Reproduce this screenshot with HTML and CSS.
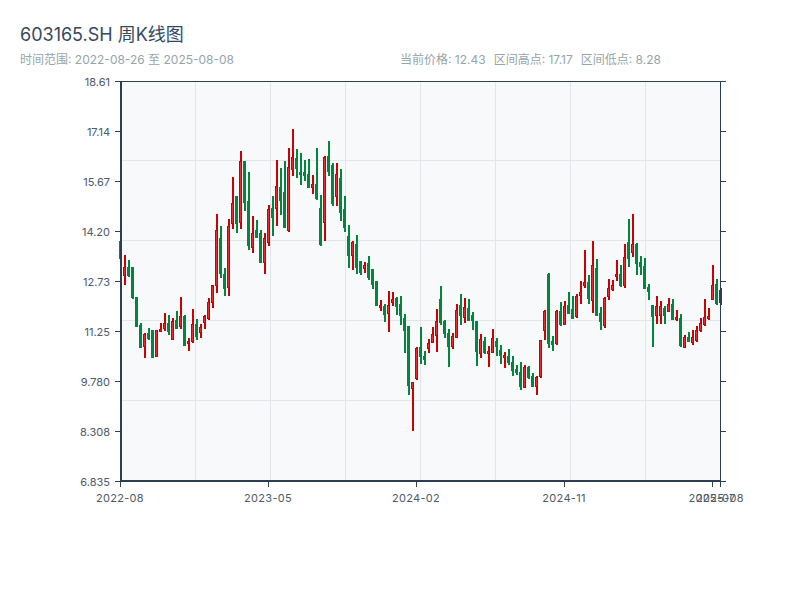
FILE: index.html
```html
<!DOCTYPE html>
<html>
<head>
    <meta charset="utf-8">
    <title>603165.SH 周K线图</title>
    <link rel="stylesheet" href="styles.css">
</head>
<body>
    <div class="header">
        <h1 class="title">603165.SH 周K线图</h1>
        <div class="meta">
            <div class="range">时间范围: 2022-08-26 至 2025-08-08</div>
            <div class="stats">
                <span>当前价格: 12.43</span>
                <span>区间高点: 17.17</span>
                <span>区间低点: 8.28</span>
            </div>
        </div>
    </div>

    <svg id="chart" class="chart" viewBox="0 70 800 530" xmlns="http://www.w3.org/2000/svg"></svg>

    <script>
        // [wick top, wick bottom, body top, body bottom, 1 = red], all in pixels
        const candles = [
            [241,258,241,258,0],[255,285,267,275,1],[260,277,267,275,0],[267,299,267,297,0],[297,327,297,326,0],
            [323,348,325,347,0],[333,358,334,346,1],[328,340,333,338,0],[330,357,330,357,0],[330,356,330,356,1],
            [323,331,329,331,1],[313,331,323,328,1],[315,335,323,331,0],[318,340,321,339,1],[311,329,320,328,0],
            [297,329,316,326,1],[315,346,316,345,0],[338,351,341,343,1],[309,343,324,341,1],[319,340,324,336,0],
            [324,338,327,332,1],[315,329,316,322,1],[298,320,302,318,1],[285,308,285,302,1],[214,293,230,285,1],
            [226,278,238,273,0],[268,296,274,288,0],[219,296,226,287,1],[177,229,203,223,1],[196,233,196,223,0],
            [151,229,161,222,1],[161,211,161,202,0],[172,250,201,245,0],[216,253,233,247,1],[220,238,230,237,0],
            [230,263,233,262,0],[233,274,238,262,1],[205,246,209,242,1],[196,236,208,217,0],[160,226,186,208,1],
            [168,215,187,200,0],[161,227,192,227,0],[148,232,167,230,1],[129,176,157,169,1],[149,178,158,168,0],
            [153,185,172,174,0],[160,181,172,175,0],[159,188,174,187,0],[175,194,184,187,1],[148,200,184,198,0],
            [195,246,208,244,0],[156,241,157,222,1],[141,176,156,171,0],[163,206,165,203,0],[163,206,174,196,1],
            [169,221,178,212,0],[196,232,209,227,0],[225,268,236,255,0],[241,270,242,255,1],[235,274,244,267,0],
            [261,275,261,272,0],[262,273,265,268,1],[256,280,263,277,0],[269,289,269,284,0],[281,306,281,305,0],
            [300,311,305,307,1],[304,322,306,314,0],[291,332,305,313,1],[292,306,299,302,1],[297,315,298,306,0],
            [296,325,304,315,0],[314,353,318,330,0],[326,395,326,385,0],[382,431,382,388,1],[347,380,348,378,1],
            [327,364,347,356,0],[351,365,356,359,0],[339,353,343,348,1],[327,343,334,342,1],[309,352,321,335,1],
            [286,325,299,322,0],[320,338,321,333,0],[329,367,333,346,0],[333,349,336,346,1],[304,338,310,337,1],
            [294,325,305,315,0],[298,323,307,317,1],[299,321,308,320,0],[312,330,315,320,0],[321,366,321,351,0],
            [334,358,339,353,1],[337,354,341,352,0],[346,367,351,353,1],[329,353,338,352,1],[338,356,341,346,0],
            [345,364,350,355,0],[352,368,355,357,1],[349,365,356,362,0],[356,376,362,370,0],[365,375,369,372,0],
            [362,390,372,386,0],[365,388,367,387,1],[366,379,367,377,0],[373,387,376,386,0],[376,395,377,386,1],
            [340,378,340,376,1],[310,340,311,330,1],[273,348,274,343,0],[336,351,341,344,0],[310,345,311,343,1],
            [302,326,311,324,0],[301,325,306,324,1],[292,313,305,313,0],[296,319,309,318,0],[294,318,296,316,1],
            [281,304,292,295,1],[250,288,282,285,1],[275,304,282,298,0],[241,313,265,300,1],[259,315,268,315,0],
            [307,330,313,321,0],[297,328,298,325,1],[279,300,288,296,1],[280,291,285,289,1],[260,281,274,276,1],
            [265,287,274,285,0],[244,288,257,285,1],[219,267,242,258,0],[214,257,244,252,1],[243,275,244,263,0],
            [256,275,262,266,0],[258,288,266,288,0],[284,300,287,291,0],[305,347,305,316,0],[296,324,306,315,1],
            [301,324,306,315,1],[306,324,308,315,0],[298,311,304,311,1],[299,320,304,319,0],[310,321,317,319,1],
            [314,347,318,345,0],[335,348,337,347,1],[332,342,337,341,0],[330,345,337,342,1],[326,342,330,340,1],
            [318,332,323,330,1],[299,326,317,324,1],[308,320,316,318,1],[265,300,285,299,1],[279,305,284,303,0],
            [288,305,290,302,1]
        ];

        const chart = document.getElementById('chart');
        const yLabels = ['18.61', '17.14', '15.67', '14.20', '12.73', '11.25', '9.780', '8.308', '6.835'];
        const xLabels = [[120, '2022-08'], [268, '2023-05'], [416, '2024-02'], [564, '2024-11'], [712, '2025-07'], [720, '2025-08']];

        function add(tag, attrs, text) {
            const el = document.createElementNS('http://www.w3.org/2000/svg', tag);
            for (const name in attrs) {
                el.setAttribute(name, attrs[name]);
            }
            if (text) {
                el.textContent = text;
            }
            chart.appendChild(el);
        }

        function line(x1, y1, x2, y2, cls) {
            add('line', { x1, y1, x2, y2, class: cls });
        }

        add('rect', { x: 121, y: 81, width: 600, height: 400, class: 'plot' });

        // Grid
        for (let x = 195.5; x < 720; x += 75) {
            line(x, 81, x, 481, 'grid');
        }
        for (let y = 160.5; y < 480; y += 80) {
            line(121, y, 720, y, 'grid');
        }

        // Candles
        candles.forEach(function (c, i) {
            const x = 120 + i * 4;
            const color = c[4] ? 'up' : 'down';
            add('rect', { x: x, y: c[0], width: 2, height: c[1] - c[0], class: color });
            add('rect', { x: x - 0.5, y: c[2] + 0.5, width: 2, height: c[3] - c[2], class: color + '-body' });
        });

        // Axes
        line(121, 81, 121, 482, 'axis-thick');
        line(120, 481, 721, 481, 'axis-thick');
        line(121, 81.5, 721, 81.5, 'axis');
        line(720.5, 81, 720.5, 481, 'axis');

        yLabels.forEach(function (label, i) {
            const y = 81.5 + i * 50;
            line(115, y, 120, y, 'axis');
            line(720, y, 726, y, 'axis');
            add('text', { x: 110, y: y + 4, class: 'y-label' }, label);
        });

        xLabels.forEach(function (item) {
            line(item[0] + 0.5, 481, item[0] + 0.5, 487, 'axis');
            add('text', { x: item[0], y: 502, class: 'x-label' }, item[1]);
        });
    </script>
</body>
</html>
```

FILE: styles.css
```css
body {
    margin: 0;
    background-color: #fff;
    font-family: 'Inter', 'Noto Sans CJK SC', sans-serif;
}

.header {
    height: 70px;
    padding: 0 20px;
    box-sizing: border-box;
}

.title {
    margin: 0;
    padding-top: 23px;
    font-size: 18px;
    font-weight: 400;
    line-height: 24px;
    color: #34495e;
}

.meta {
    display: grid;
    grid-template-columns: 380px 1fr;
    margin-top: 5px;
    font-size: 12px;
    line-height: 16px;
    color: #95a5a6;
}

.stats {
    display: flex;
    gap: 8px;
}

.chart {
    display: block;
    width: 800px;
    height: 530px;
}

.plot {
    fill: #f8f9fb;
}

.grid {
    stroke: #e2e5ea;
    stroke-width: 1;
}

.axis {
    stroke: #2c3e50;
    stroke-width: 1;
}

.axis-thick {
    stroke: #2c3e50;
    stroke-width: 2;
}

.up {
    fill: #cc0000;
}

.up-body {
    fill: #f02828;
    stroke: #cc0000;
    stroke-width: 1;
}

.down {
    fill: #00873c;
}

.down-body {
    fill: #00873c;
    stroke: #00873c;
    stroke-width: 1;
}

.y-label,
.x-label {
    font-size: 11px;
    fill: #4d5a68;
}

.y-label {
    text-anchor: end;
}

.x-label {
    text-anchor: middle;
    letter-spacing: 0.3px;
}
```
